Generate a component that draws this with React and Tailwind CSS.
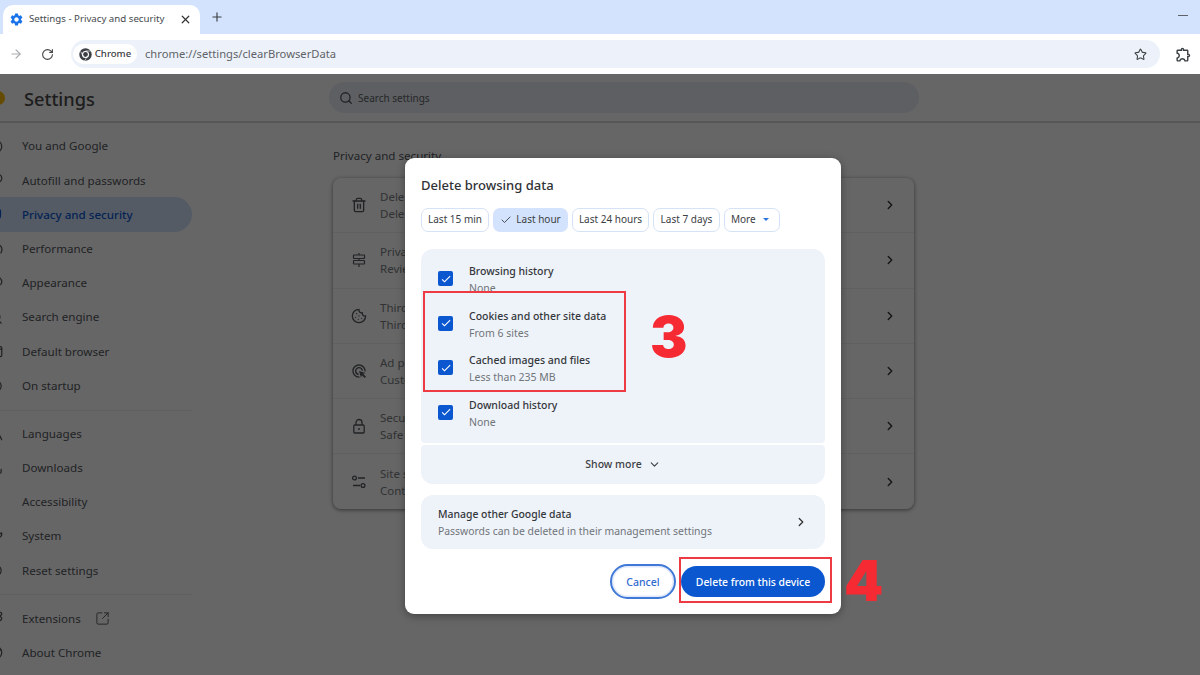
import React from 'react';
import { ArrowRight, RotateCw, Plus, X, Star, Search, Trash2, Cookie, ChevronRight, ChevronDown, Check, SquareArrowOutUpRight, KeyRound, Shield, Gauge, Palette, AppWindow, Power, Languages, Download, PersonStanding, Wrench, RotateCcw, Puzzle, Chromium, CircleUser } from 'lucide-react';
import { MdSettings, MdOutlineExtension, MdOutlineAdsClick, MdCheck } from 'react-icons/md';

const navTop = [
	{ label: 'You and Google', icon: CircleUser },
	{ label: 'Autofill and passwords', icon: KeyRound },
	{ label: 'Privacy and security', icon: Shield, active: true },
	{ label: 'Performance', icon: Gauge },
	{ label: 'Appearance', icon: Palette },
	{ label: 'Search engine', icon: Search },
	{ label: 'Default browser', icon: AppWindow },
	{ label: 'On startup', icon: Power },
];
const navMid = [
	{ label: 'Languages', icon: Languages },
	{ label: 'Downloads', icon: Download },
	{ label: 'Accessibility', icon: PersonStanding },
	{ label: 'System', icon: Wrench },
	{ label: 'Reset settings', icon: RotateCcw },
];

const Sliders = ({ size }) => (
	<svg width={size} height={size} viewBox="0 0 16 16" fill="none" stroke="currentColor" strokeWidth="1.3">
		<circle cx="3.5" cy="4" r="1.9" />
		<path d="M7 4h7M2 11.5h7" />
		<circle cx="12" cy="11.5" r="1.9" />
	</svg>
);

const SignBoards = ({ size }) => (
	<svg width={size} height={size} viewBox="0 0 16 16" fill="none" stroke="currentColor" strokeWidth="1.2">
		<path d="M8 1v2M8 6.5v2M8 12v3" />
		<rect x="2.5" y="3" width="11" height="3.5" rx="0.5" />
		<rect x="2.5" y="8.5" width="11" height="3.5" rx="0.5" />
	</svg>
);

const PadLock = ({ size }) => (
	<svg width={size} height={size} viewBox="0 0 16 16" fill="none" stroke="currentColor" strokeWidth="1.3">
		<path d="M5 7V4.5a3 3 0 0 1 6 0V7" />
		<rect x="2.8" y="7" width="10.4" height="8" rx="1" />
		<circle cx="8" cy="11" r="1" fill="currentColor" stroke="none" />
	</svg>
);

const cardRows = [
	{ icon: Trash2, title: 'Dele', sub: 'Dele' },
	{ icon: SignBoards, title: 'Priva', sub: 'Revie' },
	{ icon: Cookie, title: 'Third', sub: 'Third' },
	{ icon: MdOutlineAdsClick, title: 'Ad p', sub: 'Custo' },
	{ icon: PadLock, title: 'Secu', sub: 'Safe' },
	{ icon: Sliders, title: 'Site s', sub: 'Cont' },
];

const chips = [
	{ label: 'Last 15 min', w: 'w-[68px]' },
	{ label: 'Last hour', w: 'w-[75px]', active: true },
	{ label: 'Last 24 hours', w: 'w-[77px]' },
	{ label: 'Last 7 days', w: 'w-[67px]' },
];

const dataRows = [
	{ title: 'Browsing history', sub: 'None' },
	{ title: 'Cookies and other site data', sub: 'From 6 sites' },
	{ title: 'Cached images and files', sub: 'Less than 235 MB' },
	{ title: 'Download history', sub: 'None' },
];

const ChromeLogo = () => (
	<svg width="13" height="13" viewBox="0 0 24 24">
		<circle cx="12" cy="12" r="11.5" fill="#3c4043" />
		<circle cx="12" cy="12" r="6.5" fill="#fff" />
		<circle cx="12" cy="12" r="4.4" fill="#3c4043" />
		<path d="M12 5.5h10M8 15.5L3 6.5M15.5 15L10.5 23.5" stroke="#fff" strokeWidth="1.2" />
	</svg>
);

const NavItem = ({ label, icon: Icon, active }) => (
	<div className={`h-[34.2px] w-[192px] flex items-center rounded-r-full text-[11.6px] ${active ? 'bg-[#d3e3fd] text-[#0b57d0] font-medium' : 'text-[#54585c]'}`}>
		<Icon size={15} className="-ml-[12px] mr-[19px] shrink-0" />
		{label}
	</div>
);

const App = () => {
	return (
		<div className="w-[1200px] h-[675px] overflow-hidden relative bg-white font-['Noto_Sans',sans-serif] text-[#1f1f1f]">
			{/* tab strip */}
			<div className="h-[34px] bg-[#d3e3fd] flex items-end pl-[3px] pr-[12px]">
				<div className="w-[197px] h-[29px] bg-white rounded-t-[10px] flex items-center pl-[6px] pr-[8px]">
					<MdSettings size={15} className="text-[#1a73e8] shrink-0" />
					<span className="ml-[5px] text-[9.7px] text-[#45494d] whitespace-nowrap flex-1">Settings - Privacy and security</span>
					<X size={13} strokeWidth={2.2} className="text-[#333]" />
				</div>
				<Plus size={14} strokeWidth={2} className="text-[#3c4043] ml-[10px] mb-[10px]" />
				<div className="ml-auto w-[10px] h-[1px] bg-[#5f6368] mb-[18px]"></div>
			</div>
			{/* toolbar */}
			<div className="h-[40px] bg-white flex items-center">
				<ArrowRight size={14} className="text-[#a8abae] ml-[9px]" />
				<RotateCw size={13} strokeWidth={2} className="text-[#444] ml-[18px]" />
				<div className="ml-[17px] w-[1089px] h-[28px] bg-[#edf2fa] rounded-full flex items-center pl-[2px] pr-[13px]">
					<div className="w-[64px] h-[20px] bg-white rounded-full flex items-center justify-center gap-[3px]">
						<ChromeLogo />
						<span className="text-[9.6px] font-medium text-[#3c4043]">Chrome</span>
					</div>
					<span className="ml-[8px] text-[11.2px] text-[#5f6368] flex-1">chrome://settings/clearBrowserData</span>
					<Star size={13} strokeWidth={2} className="text-[#3c4043]" />
				</div>
				<MdOutlineExtension size={17} className="text-[#3c4043] ml-[15px]" />
			</div>
			{/* settings page */}
			<div className="h-[49px] flex items-center border-b-[2px] border-[#d8d8d8]">
				<div className="w-[14px] h-[14px] rounded-full bg-[#fbbc04] -ml-[9px] shrink-0"></div>
				<span className="ml-[19px] w-[305px] pt-[5px] text-[18.2px] font-medium text-[#4a4a4a]">Settings</span>
				<div className="w-[590px] h-[31px] rounded-full bg-[#e9eef6] flex items-center pl-[10px] gap-[5px]">
					<Search size={14} strokeWidth={2.2} className="text-[#555]" />
					<span className="pt-[1px] text-[10px] text-[#5f6368]">Search settings</span>
				</div>
			</div>
			<div className="flex">
				<div className="w-[333px] pt-[6px] shrink-0">
					{navTop.map((item) => <NavItem key={item.label} {...item} />)}
					<div className="w-[192px] border-t border-[#eeeeee] mt-[7px] mb-[6px]"></div>
					{navMid.map((item) => <NavItem key={item.label} {...item} />)}
					<div className="w-[192px] border-t border-[#eeeeee] mt-[7px] mb-[6px]"></div>
					<div className="h-[34.2px] flex items-center text-[11.6px] text-[#54585c]">
						<Puzzle size={15} className="-ml-[12px] mr-[19px] shrink-0" />
						Extensions
						<SquareArrowOutUpRight size={15} strokeWidth={1.5} className="ml-[14px]" />
					</div>
					<NavItem label="About Chrome" icon={Chromium} />
				</div>
				<div className="w-[581px]">
					<div className="text-[11.6px] text-[#54585c] pt-[24px] leading-[17px]">Privacy and security</div>
					<div className="mt-[14px] rounded-[8px] bg-white shadow-[0_1px_4px_rgba(0,0,0,0.5)]">
						{cardRows.map((row, i) => (
							<div key={i} className={`flex items-center pr-[17px] ${i > 0 ? 'h-[55.3px] border-t border-[#f0f0f0]' : 'h-[54.3px]'}`}>
								<div className="w-[47px] flex justify-center pl-[4px] text-[#54585c]">
									<row.icon size={16} />
								</div>
								<div className="flex-1 text-[11.5px] leading-[17px] text-[#7a7e82]">
									<div>{row.title}</div>
									<div>{row.sub}</div>
								</div>
								<ChevronRight size={14} strokeWidth={2.4} className="text-[#333]" />
							</div>
						))}
					</div>
				</div>
			</div>

			{/* dim layer */}
			<div className="absolute left-0 right-0 top-[74px] bottom-0 bg-black/60"></div>

			{/* dialog */}
			<div className="absolute left-[405px] top-[158px] w-[436px] h-[456px] bg-white rounded-[9px] shadow-[0_2px_8px_rgba(0,0,0,0.35)] px-[16px] pt-[19px]">
				<div className="text-[13px] font-medium leading-[17px] text-[#303336]">Delete browsing data</div>
				<div className="mt-[14px] flex gap-[4px]">
					{chips.map((chip) => (
						<div key={chip.label} className={`${chip.w} h-[24px] pb-[1px] rounded-[7px] flex items-center justify-center gap-[4px] text-[10px] text-[#3c4043] ${chip.active ? 'bg-[#d3e3fd]' : 'border border-[#d6e2f5]'}`}>
							{chip.active && <Check size={12} strokeWidth={1.8} />}
							{chip.label}
						</div>
					))}
					<div className="w-[56px] h-[24px] pb-[1px] rounded-[7px] border border-[#d6e2f5] flex items-center pl-[6px] text-[10px] text-[#3c4043]">
						More
						<div className="ml-[7px] w-0 h-0 border-x-[3.5px] border-x-transparent border-t-[3.5px] border-t-[#2a74e0]"></div>
					</div>
				</div>
				<div className="mt-[17px] h-[194px] bg-[#eef2f9] rounded-t-[12px] rounded-b-[4px] pt-[14px] pl-[17px]">
					{dataRows.map((row) => (
						<div key={row.title} className="h-[44.5px] flex items-start">
							<div className="mt-[8px] w-[15px] h-[15px] rounded-[2px] bg-[#0b57d0] flex items-center justify-center">
								<MdCheck size={12} className="text-white" />
							</div>
							<div className="ml-[16px] text-[10.5px] leading-[17px]">
								<div className="font-medium text-[#33373b]">{row.title}</div>
								<div className="text-[#70757a]">{row.sub}</div>
							</div>
						</div>
					))}
				</div>
				<div className="mt-[2px] h-[39px] bg-[#eef2f9] rounded-t-[4px] rounded-b-[12px] flex items-center justify-center gap-[6px] text-[10.5px] font-medium text-[#3c4043]">
					Show more
					<ChevronDown size={13} strokeWidth={2} />
				</div>
				<div className="mt-[11px] h-[54px] bg-[#eef2f9] rounded-[12px] flex items-center pl-[17px] pr-[17px]">
					<div className="flex-1 pt-[2px] text-[10.4px] leading-[17px]">
						<div className="font-medium text-[#33373b]">Manage other Google data</div>
						<div className="text-[#70757a]">Passwords can be deleted in their management settings</div>
					</div>
					<ChevronRight size={14} strokeWidth={2.2} className="text-[#333]" />
				</div>
				<div className="mt-[15px] flex justify-end items-center gap-[5px]">
					<div className="w-[66px] h-[35px] pt-[2px] rounded-full border-2 border-[#3f78d6] shadow-[inset_0_0_0_1.5px_#dfe9fb] flex items-center justify-center text-[10.5px] font-medium text-[#2f6bd0]">Cancel</div>
					<div className="w-[144px] h-[31px] pt-[2px] rounded-full bg-[#0b57d0] flex items-center justify-center text-[10.4px] font-medium text-white">Delete from this device</div>
				</div>
			</div>

			{/* annotations */}
			<div className="absolute left-[423px] top-[291px] w-[203px] h-[101px] border-2 border-[#ee3a43]"></div>
			<div className="absolute left-[679px] top-[557px] w-[153px] h-[46px] border-2 border-[#ee3a43]"></div>
			<div className="absolute left-[650px] top-[301px] text-[56px] leading-[72px] font-black font-['Inter',sans-serif] text-[#f62a33]">3</div>
			<div className="absolute left-[844px] top-[545px] text-[56px] leading-[72px] font-black font-['Inter',sans-serif] text-[#f62a33]">4</div>
		</div>
	);
};

export default App;
